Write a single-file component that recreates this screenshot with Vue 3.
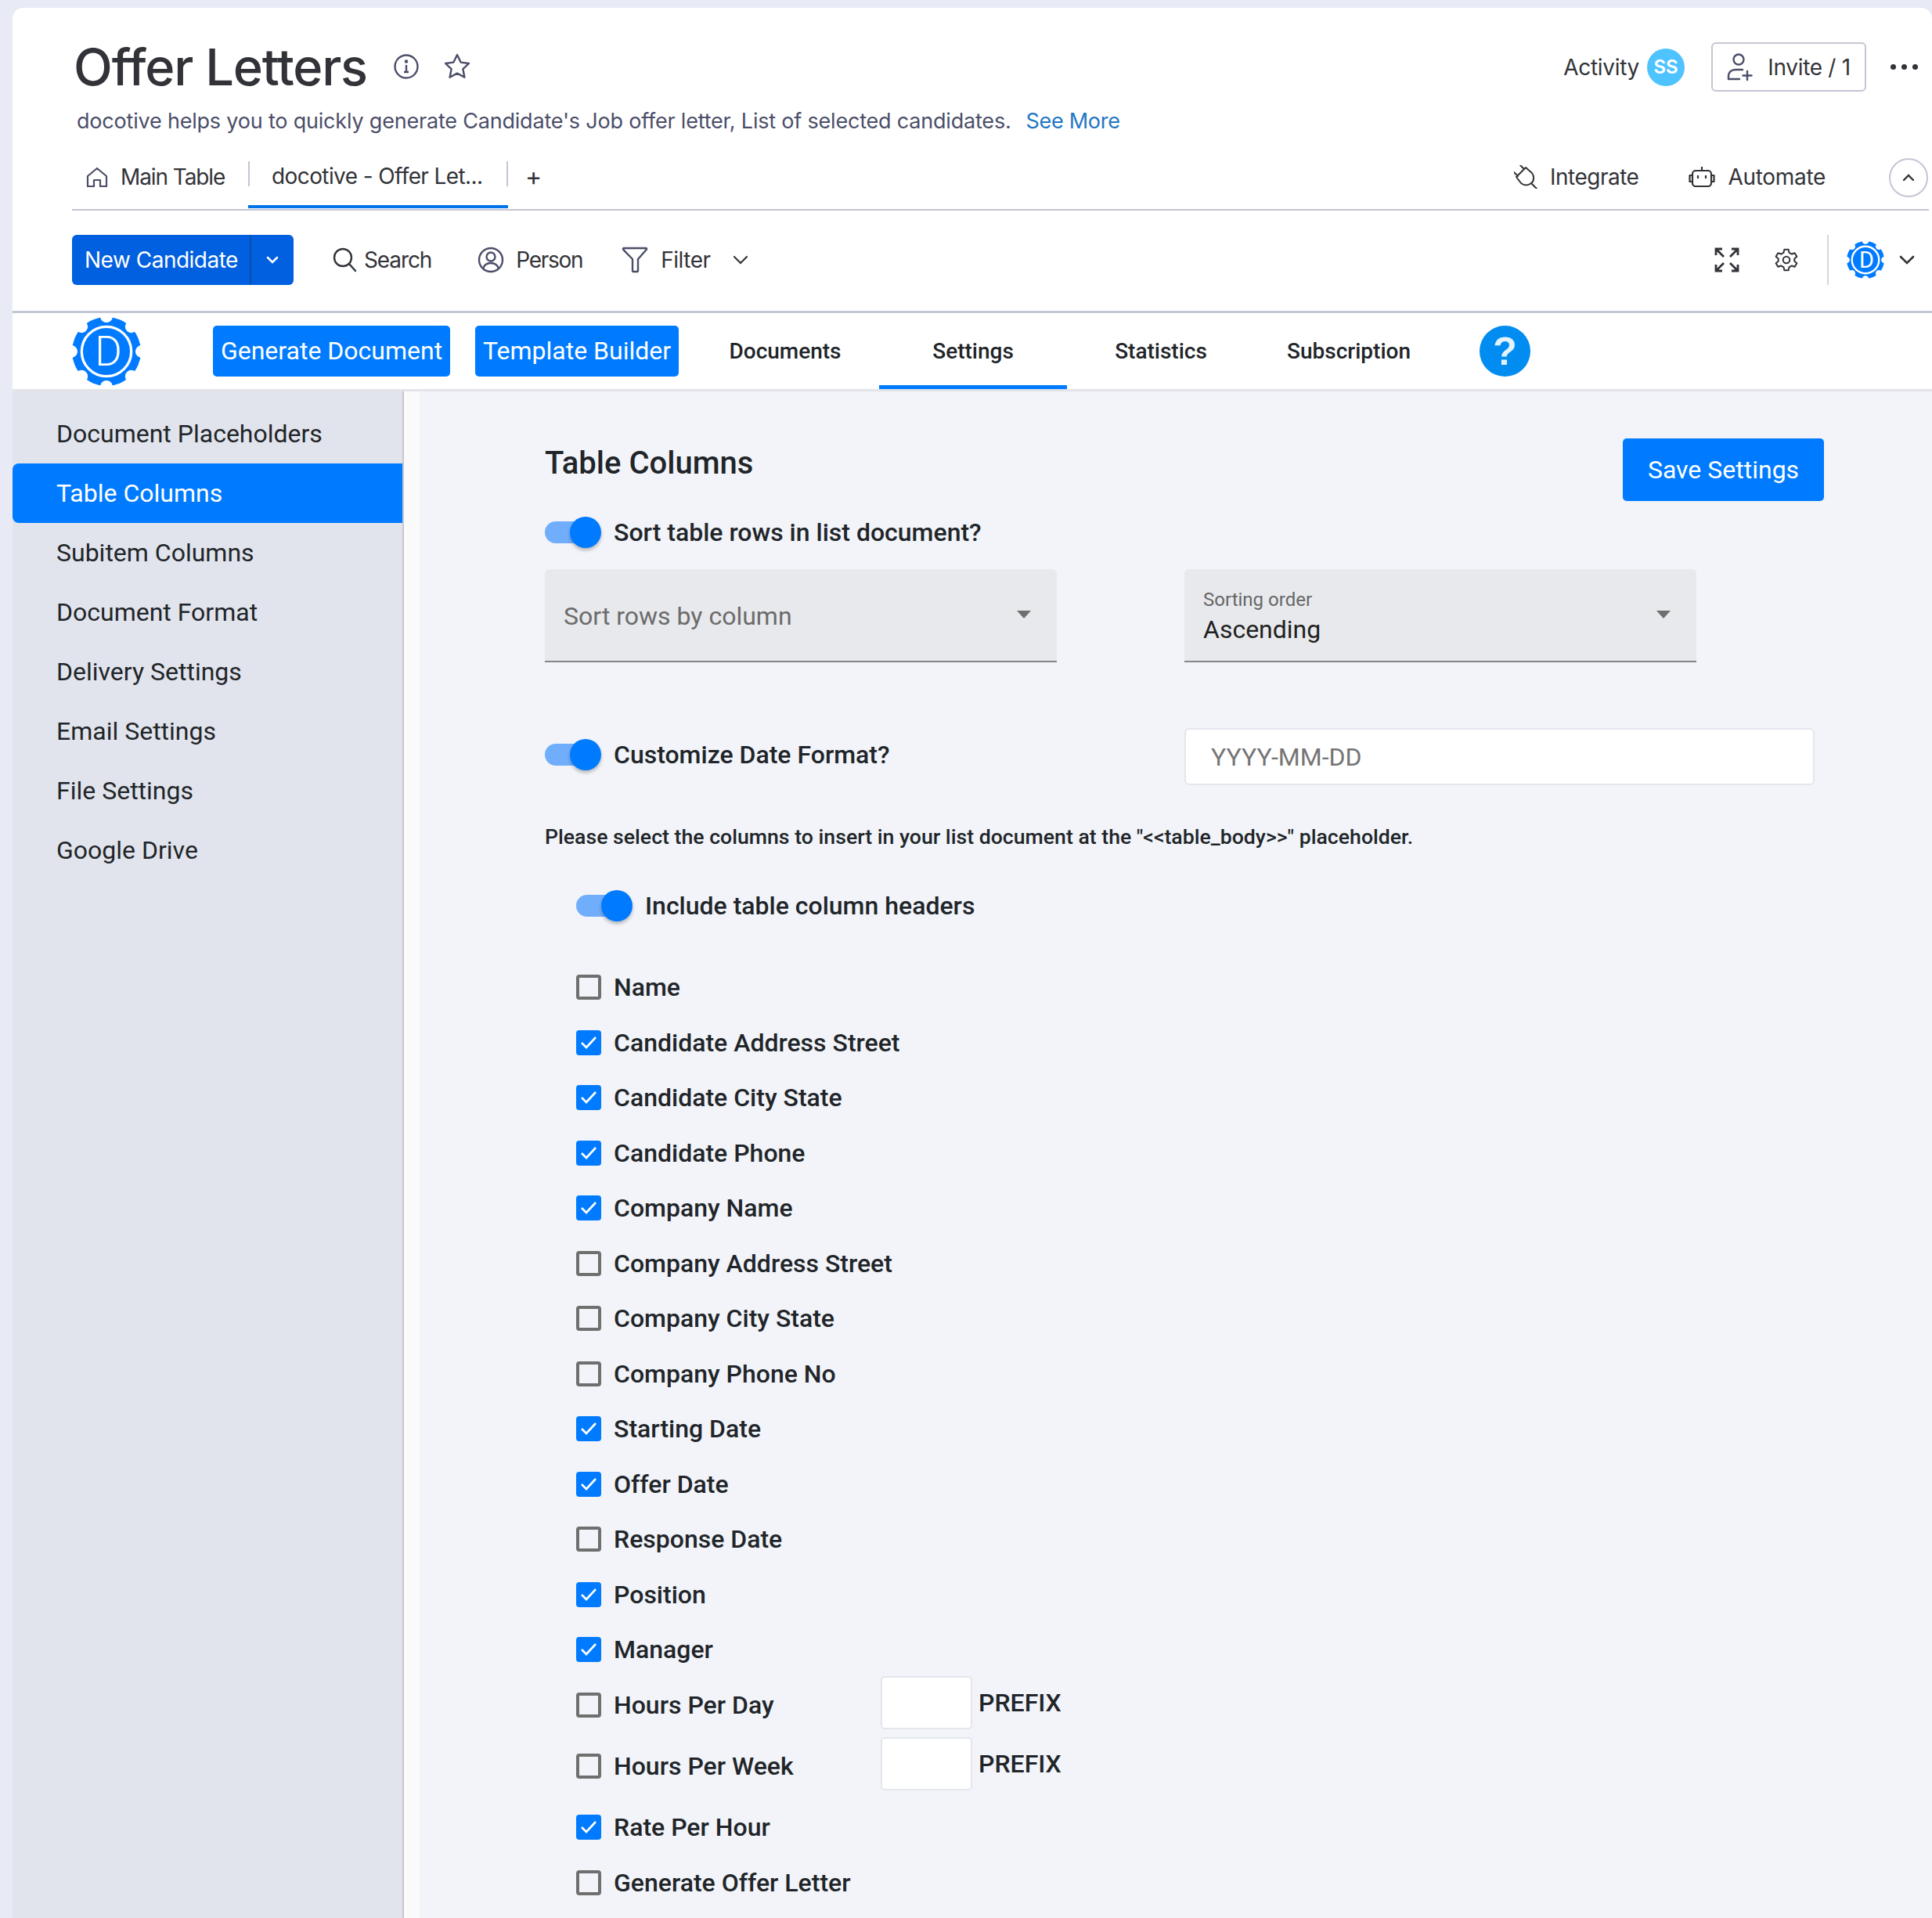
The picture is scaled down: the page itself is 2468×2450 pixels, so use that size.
<script setup>
const sideItems = ['Document Placeholders', 'Table Columns', 'Subitem Columns', 'Document Format', 'Delivery Settings', 'Email Settings', 'File Settings', 'Google Drive']

const columns = [
  { name: 'Name', on: false },
  { name: 'Candidate Address Street', on: true },
  { name: 'Candidate City State', on: true },
  { name: 'Candidate Phone', on: true },
  { name: 'Company Name', on: true },
  { name: 'Company Address Street', on: false },
  { name: 'Company City State', on: false },
  { name: 'Company Phone No', on: false },
  { name: 'Starting Date', on: true },
  { name: 'Offer Date', on: true },
  { name: 'Response Date', on: false },
  { name: 'Position', on: true },
  { name: 'Manager', on: true },
  { name: 'Hours Per Day', on: false, prefix: true },
  { name: 'Hours Per Week', on: false, prefix: true },
  { name: 'Rate Per Hour', on: true },
  { name: 'Generate Offer Letter', on: false }
]

// notches round the logo gear
const notches = [0, 45, 90, 135, 180, 225, 270, 315].map(a => ({
  x: 50 + 51 * Math.cos(a * Math.PI / 180),
  y: 50 + 51 * Math.sin(a * Math.PI / 180)
}))
</script>

<template>
  <div class="page">
    <div class="board">
      <div class="title-row">
        <h1>Offer Letters</h1>
        <svg class="title-icon" width="34" height="34" viewBox="0 0 34 34" fill="none" stroke="#4b4e69" stroke-width="2.4">
          <circle cx="17" cy="17" r="14.5" />
          <path d="M17 15v9M14 24h6" />
          <circle cx="17" cy="10.5" r="1" fill="#4b4e69" />
        </svg>
        <svg class="star-icon" width="36" height="36" viewBox="0 0 36 36" fill="none" stroke="#4b4e69" stroke-width="2.4" stroke-linejoin="round">
          <path d="M18 3l4.6 9.6 10.4 1.4-7.6 7.2 2 10.6L18 26.6 8.600 31.800l2-10.600L3 14l10.400-1.400z" />
        </svg>
        <div class="title-right">
          <span class="activity">Activity</span>
          <span class="avatar">SS</span>
          <button class="invite">
            <svg width="36" height="38" viewBox="0 0 36 38" fill="none" stroke="#4b4e69" stroke-width="2.4" stroke-linecap="round">
              <circle cx="15" cy="9" r="6.500" />
              <path d="M2 34v-3c0-6 4-9 9-9h9M26 24v11M20.500 29.500h11M2 34h14" />
            </svg>
            Invite / 1
          </button>
          <span class="dots"><i></i><i></i><i></i></span>
        </div>
      </div>

      <div class="subtitle">
        <span>docotive helps you to quickly generate Candidate's Job offer letter, List of selected candidates.</span>
        <a>See More</a>
      </div>

      <div class="view-tabs">
        <div class="view-tab first">
          <svg width="28" height="26" viewBox="0 0 28 26" fill="none" stroke="#4b4e69" stroke-width="2.2" stroke-linejoin="round">
            <path d="M2 12L14 2l12 10v13h-8v-8h-8v8H2z" />
          </svg>
          Main Table
        </div>
        <div class="view-tab active">docotive - Offer Let...</div>
        <div class="plus">+</div>
        <div class="view-right">
          <span class="view-action integrate">
            <svg width="30" height="30" viewBox="0 0 30 30" fill="none" stroke="#323338" stroke-width="2" stroke-linecap="round" stroke-linejoin="round">
              <path d="M15 3L3 15l6 8c4 3 9 3 13 0s4-9 1-13zM8 0l5 5M0 9l5 5M22 23l7 7" />
            </svg>
            Integrate
          </span>
          <span class="view-action automate">
            <svg width="34" height="26" viewBox="0 0 34 26" fill="none" stroke="#323338" stroke-width="2.200" stroke-linejoin="round">
              <rect x="5" y="5" width="24" height="20" rx="4" />
              <path d="M17 0v5M5 11H1.500v8H5M29 11h3.500v8H29M12 11v4M22 11v4" />
            </svg>
            Automate
          </span>
          <span class="collapse">
            <svg width="18" height="12" viewBox="0 0 18 12" fill="none" stroke="#323338" stroke-width="2.400" stroke-linecap="round">
              <path d="M3 9l6-6 6 6" />
            </svg>
          </span>
        </div>
      </div>

      <div class="toolbar">
        <div class="new-btn">
          <span class="new-label">New Candidate</span>
          <span class="new-arrow">
            <svg width="18" height="12" viewBox="0 0 18 12" fill="none" stroke="#fff" stroke-width="2.600" stroke-linecap="round">
              <path d="M3 3l6 6 6-6" />
            </svg>
          </span>
        </div>
        <span class="tool search">
          <svg width="32" height="32" viewBox="0 0 32 32" fill="none" stroke="#323338" stroke-width="2.400" stroke-linecap="round">
            <circle cx="13" cy="13" r="11" />
            <path d="M21 21l8 9" />
          </svg>
          Search
        </span>
        <span class="tool person">
          <svg width="34" height="34" viewBox="0 0 34 34" fill="none" stroke="#4b4e69" stroke-width="2.400">
            <circle cx="17" cy="17" r="15" />
            <circle cx="17" cy="13" r="5.500" />
            <path d="M7 28c2-6 6-7 10-7s8 1 10 7" />
          </svg>
          Person
        </span>
        <span class="tool filter">
          <svg width="34" height="34" viewBox="0 0 34 34" fill="none" stroke="#4b4e69" stroke-width="2.400" stroke-linejoin="round">
            <path d="M3 2h28c1 0 1.500 1 .8 1.800L21 16v15a1 1 0 0 1-1 1h-5a1 1 0 0 1-1-1V16L2.200 3.800C1.500 3 2 2 3 2z" />
          </svg>
          Filter
        </span>
        <svg class="filter-arrow" width="20" height="12" viewBox="0 0 20 12" fill="none" stroke="#323338" stroke-width="2.200" stroke-linecap="round">
          <path d="M2 2l8 8 8-8" />
        </svg>
        <div class="tool-right">
          <svg width="32" height="32" viewBox="0 0 32 32" fill="none" stroke="#323338" stroke-width="2.800">
            <path d="M2 10V2h8M2 2l10 10M30 10V2h-8M30 2L20 12M2 22v8h8M2 30l10-10M30 22v8h-8M30 30L20 20" />
          </svg>
          <svg class="cog" width="32" height="32" viewBox="0 0 24 24" fill="none" stroke="#323338" stroke-width="1.500" stroke-linejoin="round">
            <path d="M10 2h4l.6 3 2.500 1.400 2.900-1 2 3.500-2.300 2v2.200l2.300 2-2 3.500-2.900-1L14.600 19l-.6 3h-4l-.6-3-2.500-1.400-2.900 1-2-3.500 2.300-2v-2.200l-2.300-2 2-3.500 2.900 1L9.400 5z" />
            <circle cx="12" cy="12" r="3.200" />
          </svg>
          <span class="tool-sep"></span>
          <svg class="small-logo" width="48" height="48" viewBox="0 0 100 100">
            <circle cx="50" cy="50" r="50" fill="#007bff" />
            <circle v-for="(n, i) in notches" :key="i" :cx="n.x" :cy="n.y" r="9" fill="#fff" />
            <circle cx="50" cy="50" r="36" fill="none" stroke="#fff" stroke-width="5" />
            <text x="53" y="71" text-anchor="middle" class="logo-d small">D</text>
          </svg>
          <svg class="logo-arrow" width="20" height="12" viewBox="0 0 20 12" fill="none" stroke="#323338" stroke-width="2.600" stroke-linecap="round">
            <path d="M2 2l8 8 8-8" />
          </svg>
        </div>
      </div>

      <div class="app-nav">
        <svg class="logo" width="88" height="88" viewBox="0 0 100 100">
          <circle cx="50" cy="50" r="50" fill="#007bff" />
          <circle v-for="(n, i) in notches" :key="i" :cx="n.x" :cy="n.y" r="9" fill="#fff" />
          <circle cx="50" cy="50" r="36" fill="none" stroke="#fff" stroke-width="3.800" />
          <text x="53" y="71" text-anchor="middle" class="logo-d">D</text>
        </svg>
        <button class="nav-btn generate">Generate Document</button>
        <button class="nav-btn template">Template Builder</button>
        <span class="nav-link documents">Documents</span>
        <span class="nav-link settings">Settings</span>
        <span class="nav-link statistics">Statistics</span>
        <span class="nav-link subscription">Subscription</span>
        <span class="help">?</span>
      </div>

      <div class="body">
        <aside class="sidebar">
          <div v-for="item in sideItems" :key="item" class="side-item" :class="{ active: item === 'Table Columns' }">{{ item }}</div>
        </aside>
        <div class="edge"></div>
        <main class="content">
          <div class="head-row">
            <h2>Table Columns</h2>
            <button class="save">Save Settings</button>
          </div>

          <div class="switch-row first-switch">
            <span class="switch"><i></i></span>
            <span class="strong">Sort table rows in list document?</span>
          </div>

          <div class="select-row">
            <div class="select">
              <span class="placeholder">Sort rows by column</span>
              <b class="caret"></b>
            </div>
            <div class="select filled">
              <span class="select-label">Sorting order</span>
              <span class="select-value">Ascending</span>
              <b class="caret"></b>
            </div>
          </div>

          <div class="date-row">
            <div class="switch-row date-switch">
              <span class="switch"><i></i></span>
              <span class="strong">Customize Date Format?</span>
            </div>
            <div class="date-input">YYYY-MM-DD</div>
          </div>

          <p class="hint">Please select the columns to insert in your list document at the "&lt;&lt;table_body&gt;&gt;" placeholder.</p>

          <div class="switch-row head-switch">
            <span class="switch"><i></i></span>
            <span class="strong">Include table column headers</span>
          </div>

          <div class="col-list">
            <div v-for="col in columns" :key="col.name" class="col-row" :class="{ 'prefix-row': col.prefix }">
              <span class="check" :class="{ on: col.on }">
                <svg v-if="col.on" width="22" height="18" viewBox="0 0 22 18" fill="none" stroke="#fff" stroke-width="2.600">
                  <path d="M2 9l6 6L20 2" />
                </svg>
              </span>
              <span class="strong col-name">{{ col.name }}</span>
              <template v-if="col.prefix">
                <span class="prefix-box"></span>
                <span class="prefix-text">PREFIX</span>
              </template>
            </div>
          </div>
        </main>
      </div>
    </div>
  </div>
</template>

<style>
html, body {
  margin: 0;
  background: #e8ebf6;
}
</style>

<style scoped>
.page {
  width: 2468px;
  height: 2450px;
  overflow: hidden;
  background: #e8ebf6;
  padding: 10px 0 0 16px;
  box-sizing: border-box;
  font-family: Inter, "Liberation Sans", sans-serif;
  color: #323338;
}
.board {
  background: #fff;
  border-radius: 14px 14px 0 0;
  height: 2440px;
}
button {
  font-family: inherit;
  border: none;
  cursor: pointer;
}

.title-row {
  display: flex;
  align-items: center;
  height: 60px;
  padding: 45px 0 0 78px;
}
h1 {
  margin: 0;
  font-size: 65px;
  font-weight: 500;
  letter-spacing: -1.2px;
  color: #323338;
}
.title-icon { margin-left: 33px; }
.star-icon { margin-left: 30px; }
.title-right {
  margin-left: auto;
  padding-top: 1px;
  display: flex;
  align-items: center;
}
.activity { font-size: 28px; letter-spacing: -0.3px; margin-top: 1px; }
.avatar {
  width: 48px;
  height: 48px;
  margin-left: 10px;
  border-radius: 50%;
  background: #4fc3ff;
  color: #fff;
  font-size: 24px;
  font-weight: 600;
  display: flex;
  align-items: center;
  justify-content: center;
}
.invite {
  width: 198px;
  height: 63px;
  margin-left: 34px;
  box-sizing: border-box;
  background: #fff;
  border: 2px solid #c3c6d4;
  border-radius: 6px;
  color: #323338;
  font-size: 28px;
  letter-spacing: -0.3px;
  display: flex;
  align-items: center;
  justify-content: center;
  gap: 16px;
}
.dots {
  display: flex;
  gap: 7px;
  margin: 0 18px 0 31px;
}
.dots i {
  width: 7px;
  height: 7px;
  border-radius: 50%;
  background: #323338;
}

.subtitle {
  height: 50px;
  margin-top: 14px;
  padding-left: 82px;
  display: flex;
  align-items: center;
  font-size: 27px;
  letter-spacing: -0.2px;
  color: #4b4e69;
}
.subtitle a {
  margin-left: 19px;
  color: #1f76c2;
  letter-spacing: -0.3px;
}

.view-tabs {
  height: 82px;
  margin: 6px 4px 0 76px;
  border-bottom: 2px solid #c3c6d4;
  display: flex;
  align-items: center;
  position: relative;
}
.view-tab {
  height: 100%;
  display: flex;
  align-items: center;
  font-size: 28px;
  letter-spacing: -0.6px;
}
.view-tab.first {
  width: 225px;
  padding-left: 18px;
  gap: 16px;
  box-sizing: border-box;
  letter-spacing: -1.1px;
}
.view-tab.active {
  width: 332px;
  padding: 2px 0 0 30px;
  box-sizing: border-box;
  border-bottom: 4px solid #0073ea;
  height: 80px;
  margin-top: 0;
  position: relative;
}
.view-tab.active::before, .view-tab.active::after {
  content: "";
  position: absolute;
  top: 20px;
  width: 2px;
  height: 32px;
  background: #c3c6d4;
}
.view-tab.active::before { left: 0; }
.view-tab.active::after { right: 0; }
.plus {
  margin: -2px 0 0 22px;
  font-size: 32px;
}
.view-right {
  margin-left: auto;
  display: flex;
  align-items: center;
  height: 100%;
}
.view-action {
  display: flex;
  align-items: center;
  gap: 16px;
  font-size: 28px;
  letter-spacing: -0.5px;
}
.integrate { margin-right: 1px; }
.automate { margin-left: 63px; letter-spacing: -0.3px; }
.collapse {
  width: 50px;
  height: 50px;
  margin: 2px 1px 0 81px;
  box-sizing: border-box;
  border: 2px solid #c3c6d4;
  border-radius: 50%;
  background: #fff;
  display: flex;
  align-items: center;
  justify-content: center;
}

.toolbar {
  height: 131px;
  box-sizing: border-box;
  padding: 31px 0 0 76px;
  border-bottom: 3px solid #c3c6d4;
  display: flex;
  align-items: flex-start;
}
.new-btn {
  width: 283px;
  height: 64px;
  background: #0060e0;
  border-radius: 6px;
  color: #fff;
  display: flex;
  align-items: center;
  font-size: 28px;
  letter-spacing: -0.5px;
}
.new-label {
  width: 227px;
  padding-left: 16px;
  box-sizing: border-box;
  white-space: nowrap;
}
.new-arrow {
  flex: 1;
  height: 100%;
  border-left: 2px solid #0b4fa8;
  display: flex;
  align-items: center;
  justify-content: center;
}
.tool {
  height: 64px;
  display: flex;
  align-items: center;
  gap: 14px;
  font-size: 28px;
  letter-spacing: -0.5px;
}
.search { margin-left: 50px; gap: 8px; letter-spacing: -1.1px; }
.person { margin-left: 59px; gap: 15px; letter-spacing: -1.3px; }
.filter { margin-left: 50px; gap: 16px; }
.filter-arrow { margin: 26px 0 0 28px; }
.tool-right {
  margin-left: auto;
  height: 64px;
  display: flex;
  align-items: center;
  padding-right: 22px;
}
.cog { margin-left: 44px; }
.tool-sep {
  width: 2px;
  height: 64px;
  margin: 0 23px 0 36px;
  background: #d5d7e0;
}
.logo-arrow { margin-left: 19px; }
.logo-d {
  font-family: Roboto, sans-serif;
  font-size: 60px;
  font-weight: 300;
  fill: #fff;
}
.logo-d.small { font-weight: 400; }

.app-nav {
  height: 97px;
  border-bottom: 3px solid #e3e4e8;
  padding-left: 76px;
  display: flex;
  align-items: center;
  font-family: Roboto, sans-serif;
  position: relative;
}
.logo { flex: none; }
.nav-btn {
  height: 65px;
  background: #007bff;
  color: #fff;
  border-radius: 5px;
  font-family: Roboto, sans-serif;
  font-size: 32px;
  padding: 0;
  margin-top: -1px;
}
.generate { width: 303px; margin-left: 92px; }
.template { width: 260px; margin-left: 32px; }
.nav-link {
  height: 100%;
  box-sizing: border-box;
  display: flex;
  align-items: center;
  justify-content: center;
  font-size: 28px;
  font-weight: 500;
  color: #212529;
}
.documents { width: 240px; margin-left: 16px; }
.settings { width: 240px; border-bottom: 5px solid #007bff; padding-top: 5px; }
.statistics { width: 240px; }
.subscription { width: 240px; margin-left: 0; }
.help {
  width: 65px;
  height: 65px;
  margin-left: 47px;
  border-radius: 50%;
  background: #008cf0;
  color: #e3f2fd;
  font-family: "Liberation Sans", sans-serif;
  font-size: 50px;
  font-weight: 700;
  display: flex;
  align-items: center;
  justify-content: center;
}

.body {
  display: flex;
  height: 1950px;
  font-family: Roboto, sans-serif;
  color: #212529;
}
.sidebar {
  width: 498px;
  flex: none;
  box-sizing: content-box;
  background: #e1e4ec;
  border-right: 2px solid #c5c7d0;
  padding-top: 16px;
}
.side-item {
  height: 76px;
  margin-bottom: 0;
  padding-left: 56px;
  display: flex;
  align-items: center;
  font-size: 32px;
}
.side-item.active {
  background: #007bff;
  color: #fff;
  border-radius: 8px 0 0 8px;
}
.edge {
  width: 20px;
  flex: none;
  background: #fafafa;
}
.content {
  flex: 1;
  background: #f2f4f9;
  padding: 60px 138px 0 160px;
}
.head-row {
  display: flex;
  justify-content: space-between;
  align-items: flex-start;
  height: 80px;
}
h2 {
  margin: 0;
  padding-top: 8px;
  font-size: 40px;
  line-height: 47px;
  font-weight: 500;
  color: #212529;
}
.save {
  width: 257px;
  height: 80px;
  background: #007bff;
  color: #fff;
  border-radius: 5px;
  font-family: Roboto, sans-serif;
  font-size: 32px;
}
.switch-row {
  display: flex;
  align-items: center;
  height: 44px;
}
.first-switch { margin-top: 18px; }
.switch {
  width: 72px;
  height: 40px;
  margin-right: 16px;
  flex: none;
  position: relative;
}
.switch::before {
  content: "";
  position: absolute;
  left: 0;
  top: 6px;
  width: 62px;
  height: 28px;
  border-radius: 14px;
  background: #70aefc;
}
.switch i {
  position: absolute;
  right: 0;
  top: 0;
  width: 40px;
  height: 40px;
  border-radius: 50%;
  background: #007bff;
  box-shadow: 0 3px 4px rgba(0, 0, 0, 0.25);
}
.strong {
  font-size: 32px;
  font-weight: 500;
  color: #212529;
}
.select-row {
  display: flex;
  gap: 163px;
  margin-top: 25px;
}
.select {
  width: 654px;
  height: 119px;
  box-sizing: border-box;
  background: #e8e9ed;
  border-bottom: 2px solid #85868a;
  border-radius: 6px 6px 0 0;
  padding-left: 24px;
  display: flex;
  flex-direction: column;
  justify-content: center;
  position: relative;
}
.placeholder {
  font-size: 32px;
  color: #6b6b6b;
  margin-top: 3px;
}
.select-label {
  font-size: 24px;
  color: #666;
  margin-top: 4px;
}
.select-value {
  font-size: 32px;
  color: #212121;
  margin-top: 5px;
}
.caret {
  position: absolute;
  right: 33px;
  top: 53px;
  border-left: 9px solid transparent;
  border-right: 9px solid transparent;
  border-top: 10px solid #6f6f6f;
}
.date-row {
  display: flex;
  align-items: center;
  margin-top: 84px;
}
.date-switch { width: 817px; flex: none; margin-top: -5px; }
.date-input {
  width: 805px;
  height: 73px;
  box-sizing: border-box;
  background: #fff;
  border: 2px solid #e3e6ec;
  border-radius: 6px;
  padding-left: 32px;
  display: flex;
  align-items: center;
  font-size: 32px;
  color: #757575;
}
.hint {
  margin: 47px 0 0;
  font-size: 26.67px;
  line-height: 38px;
  font-weight: 500;
  color: #212529;
}
.head-switch { margin: 47px 0 0 40px; }
.col-list { margin: 47px 0 0 40px; }
.col-row {
  height: 70.5px;
  display: flex;
  align-items: center;
  position: relative;
}
.prefix-row {
  height: 78px;
  margin-top: -3.5px;
}
.prefix-row + .prefix-row {
  margin-top: 0;
  margin-bottom: 3.75px;
}
.check {
  width: 32px;
  height: 32px;
  flex: none;
  box-sizing: border-box;
  border: 4px solid #6f6f6f;
  border-radius: 4px;
  display: flex;
  align-items: center;
  justify-content: center;
}
.check.on {
  background: #007bff;
  border: none;
}
.col-name { margin-left: 16px; }
.prefix-box {
  position: absolute;
  left: 389px;
  top: 2px;
  width: 117px;
  height: 68px;
  box-sizing: border-box;
  background: #fff;
  border: 2px solid #e3e6ec;
  border-radius: 5px;
}
.prefix-text {
  position: absolute;
  left: 514px;
  top: 17px;
  font-size: 32px;
  font-weight: 500;
  color: #212529;
}
</style>
